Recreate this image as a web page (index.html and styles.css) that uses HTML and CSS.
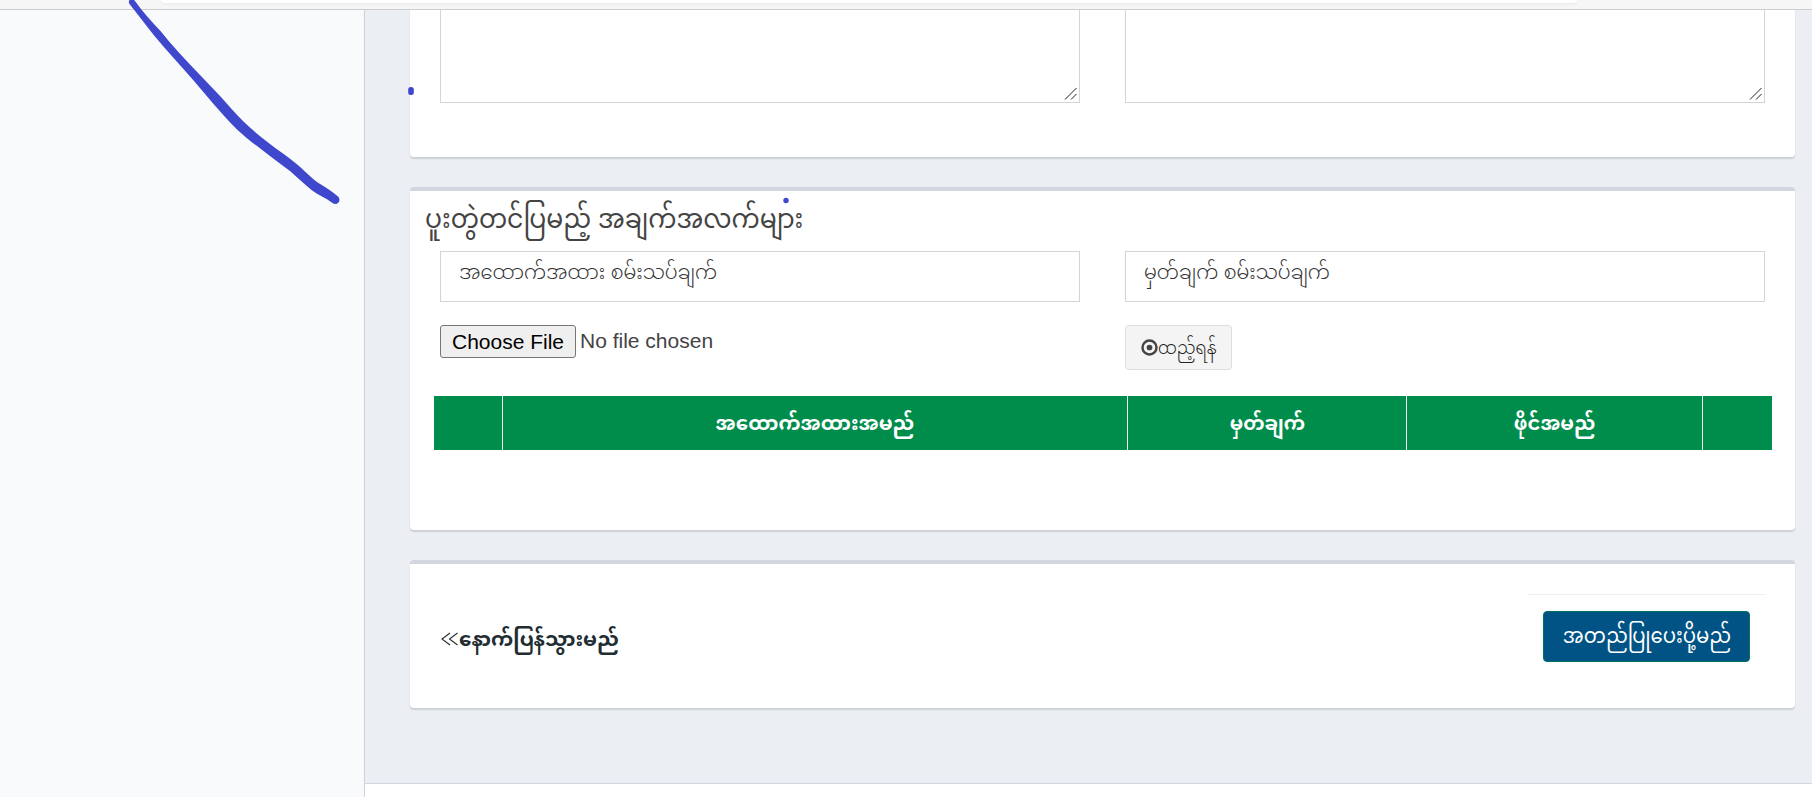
FILE: index.html
```html
<!DOCTYPE html>
<html lang="my">
<head>
<meta charset="utf-8">
<title>Application form</title>
<link rel="stylesheet" href="styles.css">
</head>
<body>
<div class="topbar"><div class="address"></div></div>
<div class="layout">
  <aside class="sidebar"></aside>
  <main class="main">
    <div class="content">
      <section class="card card-notes">
        <div class="area"><svg class="grip" viewBox="0 0 14 14"><path d="M1 12.500 12.500 1M7 12.500 12.500 7"/></svg></div>
        <div class="area"><svg class="grip" viewBox="0 0 14 14"><path d="M1 12.500 12.500 1M7 12.500 12.500 7"/></svg></div>
      </section>
      <section class="card card-files">
        <h4 class="title"><span class="t t-title">ပူးတွဲတင်ပြမည့် အချက်အလက်များ</span></h4>
        <div class="fields">
          <div class="input"><span class="t t-doc">အထောက်အထား စမ်းသပ်ချက်</span></div>
          <div class="input"><span class="t t-note">မှတ်ချက် စမ်းသပ်ချက်</span></div>
          <div class="file"><span class="choose">Choose File</span><span>No file chosen</span></div>
          <div class="add"><svg class="dot" viewBox="0 0 16 16"><circle class="ring" cx="8" cy="8" r="6.600"/><circle cx="8" cy="8" r="2.700"/></svg><span class="t t-add">ထည့်ရန်</span></div>
        </div>
        <div class="table">
          <div class="th"></div>
          <div class="th"><span class="t t-h1">အထောက်အထားအမည်</span></div>
          <div class="th"><span class="t t-h2">မှတ်ချက်</span></div>
          <div class="th"><span class="t t-h3">ဖိုင်အမည်</span></div>
          <div class="th"></div>
        </div>
      </section>
      <section class="card card-actions">
        <a class="back"><svg class="chev" viewBox="0 0 18 14"><path d="M9.500 1 1.500 7l8 6M17 1 9 7l8 6"/></svg><span class="t t-back">နောက်ပြန်သွားမည်</span></a>
        <div class="submit-col"><div class="submit"><span class="t t-submit">အတည်ပြုပေးပို့မည်</span></div></div>
      </section>
    </div>
    <footer class="footer"></footer>
  </main>
</div>
<svg class="ink" viewBox="0 0 1812 797">
  <path d="M129.500 4 C127 0 132 -3 135 1 C142 11 151 21 160.500 31 C172 46 186 60 200 75 L220.500 96.500 C228 105 235 113 243.500 121.500 C252 130 261 137 270 144 C279 151 287 156 296 163.500 C304 170 311 178 318.500 183 C325 187 332 191 338 196.500 C342 201 337 206 332.500 203 C326 198 318 195 311.500 190 C304 184 297 177 290 171 C281 164 272 158 263.500 151 C254 144 245 137 236.500 129 C228 121 221 112 213.500 104 L194 81 C181 66 167 51 154.500 36 C146 25 138 15 129.500 4Z"/>
  <rect x="408.200" y="87" width="5.600" height="8" rx="2.500"/>
  <circle cx="786" cy="200.500" r="2.700"/>
</svg>
</body>
</html>
```
FILE: styles.css
```css
* { box-sizing: border-box; }
body { margin: 0; height: 797px; overflow: hidden; display: flex; flex-direction: column; color: #444; background: #fff; font-family: "Liberation Sans", "Noto Sans Myanmar", "Padauk", sans-serif; font-size: 20px; }
.topbar { height: 10px; flex: none; background: #f6f6f6; border-bottom: 1px solid #ccc; padding: 0 235px 0 161px; }
.address { height: 3px; background: #fff; border-radius: 0 0 6px 6px; box-shadow: 0 1px 3px #e6e6e6; }
.layout { flex: 1; display: flex; min-height: 0; }
.sidebar { width: 365px; flex: none; background: #f9fafc; border-right: 1px solid #cdd0d8; }
.main { flex: 1; display: flex; flex-direction: column; background: #ebeef3; }
.content { height: 773px; flex: none; padding: 0 17px 0 45px; display: flex; flex-direction: column; gap: 30px; }
.footer { flex: 1; background: #fff; border-top: 1px solid #d2d6de; }
.card { width: 1385px; background: #fff; border-top: 4px solid #d2d6de; border-radius: 4px; box-shadow: 0 1.500px 1.500px rgba(0,0,0,.13); flex: none; }
.card-notes { height: 147px; border-top: 0; border-radius: 0 0 4px 4px; padding: 0 30px; display: grid; grid-template-columns: 640px 640px; gap: 45px; }
.area { height: 93px; border: 1px solid #d2d4d8; border-top: 0; display: flex; align-items: flex-end; justify-content: flex-end; padding: 1px; }
.grip { width: 14px; height: 14px; fill: none; stroke: #222; stroke-width: 1; }
.card-files { height: 343px; padding: 0 23px 0 24px; }
.title { margin: 0 0 0 -9px; height: 60px; padding-top: 9px; font-weight: 400; font-size: 27px; line-height: 38px; }
.fields { padding: 0 6px; display: grid; grid-template-columns: 640px 640px; grid-template-rows: 51px 45px; gap: 23px 45px; }
.input { border: 1px solid #d2d4d8; padding: 0 18px; display: flex; align-items: flex-start; font-size: 21px; line-height: 39px; color: #333; font-weight: 300; }
.file { display: flex; align-items: flex-start; gap: 4px; font-size: 21px; line-height: 31px; }
.choose { height: 33px; width: 136px; text-align: center; border: 1px solid #767676; border-radius: 3px; background: #efefef; color: #000; }
.add { width: 107px; border: 1px solid #ddd; border-radius: 4px; background: #f4f4f4; display: flex; align-items: center; padding-left: 15px; font-size: 18px; line-height: 30px; font-weight: 300; color: #222; }
.dot { width: 17px; height: 17px; flex: none; fill: #444; }
.ring { fill: none; stroke: #444; stroke-width: 2.300; }
.table { margin-top: 26px; height: 54px; display: grid; grid-template-columns: 69px 625px 279px 296px 69px; background: #008d4c; color: #fff; font-weight: 700; font-size: 19.600px; }
.th { display: flex; align-items: center; justify-content: center; line-height: 30px; border-right: 1px solid #f4f4f4; }
.th:last-child { border-right: 0; }
.card-actions { height: 148px; padding: 0 29px 0 30px; display: flex; justify-content: space-between; }
.back { display: flex; align-items: center; height: 150px; color: #222d32; font-weight: 700; font-size: 20px; line-height: 34px; }
.chev { width: 19px; height: 14px; fill: none; stroke: #222d32; stroke-width: 1.100; }
.submit-col { margin-top: 30px; width: 238px; border-top: 1px solid #f0f0f0; padding: 16px 0 0 15px; height: 80px; }
.submit { width: 207px; height: 51px; border: 1px solid #00735a; border-radius: 4px; background: #005384; color: #fff; display: flex; align-items: center; justify-content: center; padding-bottom: 2px; font-size: 21px; line-height: 36px; font-weight: 400; }
/* Condensed Myanmar text */
.t { display: inline-block; white-space: nowrap; transform-origin: left center; }
.t-title { transform: scaleX(.93); }
.t-doc, .t-note { transform: scaleX(.935); }
.t-add { transform: scaleX(.93); }
.t-h1 { transform: scaleX(1.015); transform-origin: center; }
.t-h2 { transform: scaleX(.98); transform-origin: center; }
.t-submit { transform: scaleX(.935); transform-origin: center; }
.ink { position: absolute; left: 0; top: 0; width: 1812px; height: 797px; fill: #3f48cc; pointer-events: none; }
```
